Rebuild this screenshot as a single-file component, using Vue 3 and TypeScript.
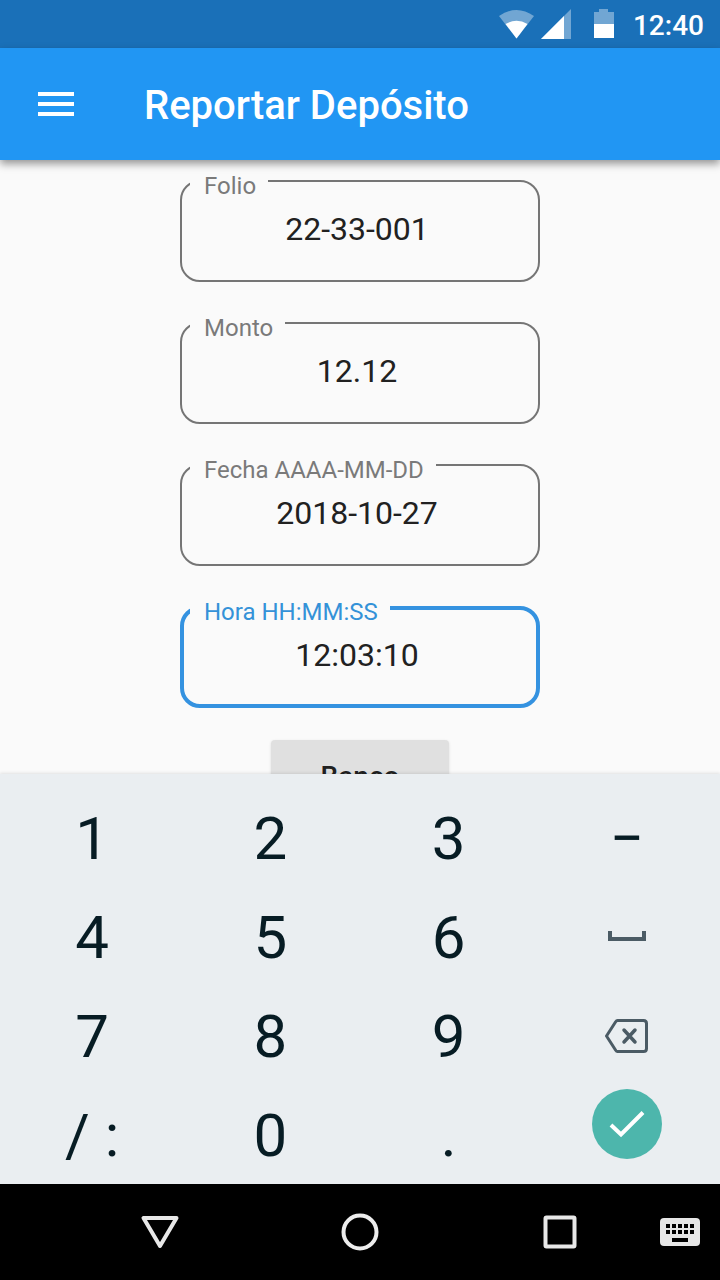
<script setup lang="ts">
import { reactive, ref } from 'vue'

interface Field {
  id: string
  label: string
  value: string
}

const fields = reactive<Field[]>([
  { id: 'folio', label: 'Folio', value: '22-33-001' },
  { id: 'monto', label: 'Monto', value: '12.12' },
  { id: 'fecha', label: 'Fecha AAAA-MM-DD', value: '2018-10-27' },
  { id: 'hora', label: 'Hora HH:MM:SS', value: '12:03:10' },
])

const activeId = ref<string>('hora')

const keys: string[] = [
  '1', '2', '3', '−',
  '4', '5', '6', 'space',
  '7', '8', '9', 'delete',
  '/ :', '0', '.', 'done',
]

function press(key: string): void {
  const field = fields.find((f) => f.id === activeId.value)
  if (!field || key === 'done') return
  if (key === 'delete') field.value = field.value.slice(0, -1)
  else if (key === 'space') field.value += ' '
  else if (key === '/ :') field.value += ':'
  else if (key === '−') field.value += '-'
  else field.value += key
}
</script>

<template>
  <div class="screen">
    <div class="status">
      <svg class="signals" width="118" height="32" viewBox="0 0 118 32" aria-hidden="true">
        <path d="M2 8Q19.500 -4 37 8L19.500 30.500Z" fill="#fff" opacity=".38" />
        <path d="M8.500 16Q19.500 9.500 30.500 16L19.500 30.500Z" fill="#fff" />
        <path d="M44 31L74 1V31Z" fill="#fff" opacity=".38" />
        <path d="M44 31L67 8V31Z" fill="#fff" />
        <path d="M97 4H102V1H111V4H117V16H97Z" fill="#fff" opacity=".38" />
        <path d="M97 16H117V30H97Z" fill="#fff" />
      </svg>
      <span class="clock">12:40</span>
    </div>

    <header class="bar">
      <button class="menu" type="button" aria-label="Menú">
        <svg width="36" height="24" viewBox="0 0 36 24" fill="#fff">
          <path d="M0 0H36V4H0ZM0 10H36V14H0ZM0 20H36V24H0Z" />
        </svg>
      </button>
      <h1>Reportar Depósito</h1>
    </header>

    <main class="content">
      <form class="form" @submit.prevent>
        <div
          v-for="field in fields"
          :key="field.id"
          class="field"
          :class="{ active: field.id === activeId }"
        >
          <input
            :id="field.id"
            v-model="field.value"
            type="text"
            inputmode="none"
            @focus="activeId = field.id"
          />
          <label :for="field.id">{{ field.label }}</label>
        </div>
        <button class="bank" type="button">Banco</button>
      </form>
    </main>

    <section class="keyboard" aria-label="Teclado">
      <button
        v-for="key in keys"
        :key="key"
        type="button"
        class="key"
        :class="{ last: key === 'done' }"
        :aria-label="key"
        @click="press(key)"
      >
        <svg v-if="key === 'space'" width="38" height="12" viewBox="0 0 38 12" fill="none">
          <path d="M2 0V8H36V0" stroke="#4b5b65" stroke-width="4" />
        </svg>
        <svg v-else-if="key === 'delete'" width="44" height="34" viewBox="0 0 44 34" fill="none" stroke="#4b5b65">
          <path
            d="M12.500 1.500H38.500Q41.500 1.500 41.500 4.500V29.500Q41.500 32.500 38.500 32.500H12.500Q11.500 32.500 10.500 31L1.500 17L10.500 3Q11.500 1.500 12.500 1.500Z"
            stroke-width="3"
            stroke-linejoin="round"
          />
          <path d="M19 11L30 23M30 11L19 23" stroke-width="3.500" stroke-linecap="round" />
        </svg>
        <span v-else-if="key === 'done'" class="done">
          <svg width="36" height="28" viewBox="0 0 36 28" fill="none">
            <path d="M2 15L12 24.500L34 2.500" stroke="#fff" stroke-width="4" />
          </svg>
        </span>
        <template v-else>{{ key }}</template>
      </button>
    </section>

    <nav class="nav">
      <button class="back" type="button" aria-label="Atrás">
        <svg width="40" height="36" viewBox="0 0 40 36" fill="none">
          <path d="M3.500 4H36.500L20 32Z" stroke="#e8e8e8" stroke-width="4" stroke-linejoin="round" />
        </svg>
      </button>
      <button class="home" type="button" aria-label="Inicio">
        <svg width="40" height="40" viewBox="0 0 40 40" fill="none">
          <circle cx="20" cy="20" r="16.500" stroke="#ededed" stroke-width="4" />
        </svg>
      </button>
      <button class="recent" type="button" aria-label="Recientes">
        <svg width="36" height="36" viewBox="0 0 36 36" fill="none">
          <rect x="3.500" y="3.500" width="29" height="29" rx="1" stroke="#e8e8e8" stroke-width="4" />
        </svg>
      </button>
      <button class="switch" type="button" aria-label="Cambiar teclado">
        <svg width="40" height="28" viewBox="0 0 40 28">
          <rect width="40" height="28" rx="4" fill="#e6e6e6" />
          <path
            d="M6 6h4v4h-4zM12 6h4v4h-4zM18 6h4v4h-4zM24 6h4v4h-4zM30 6h4v4h-4zM6 12h4v4h-4zM12 12h4v4h-4zM18 12h4v4h-4zM24 12h4v4h-4zM30 12h4v4h-4zM12 20h16v4h-16z"
            fill="#000"
          />
        </svg>
      </button>
    </nav>
  </div>
</template>

<style>
body {
  margin: 0;
}
</style>

<style scoped>
.screen {
  display: flex;
  flex-direction: column;
  height: 100vh;
  overflow: hidden;
  background: #fafafa;
  font-family: Roboto, 'Liberation Sans', sans-serif;
}

button {
  margin: 0;
  padding: 0;
  border: 0;
  background: none;
  font-family: inherit;
  cursor: pointer;
}

svg {
  display: block;
}

.status {
  display: flex;
  flex: none;
  align-items: center;
  justify-content: flex-end;
  gap: 18px;
  height: 48px;
  padding-right: 16px;
  background: #1a70b8;
  color: #fff;
}

.clock {
  padding-top: 4px;
  font-size: 28px;
  font-weight: 500;
  line-height: 44px;
}

.bar {
  position: relative;
  z-index: 1;
  display: flex;
  flex: none;
  align-items: center;
  height: 112px;
  background: #2196f3;
  box-shadow: 0 4px 8px rgba(0, 0, 0, 0.4);
}

.menu {
  display: grid;
  place-items: center;
  width: 112px;
  height: 112px;
}

h1 {
  margin: 0 0 0 32px;
  padding-top: 4px;
  color: #fff;
  font-size: 40px;
  font-weight: 500;
  line-height: 48px;
}

.content {
  flex: 1;
  min-height: 0;
  overflow: hidden;
}

.form {
  display: flex;
  flex-direction: column;
  align-items: center;
  gap: 40px;
  padding-top: 20px;
}

.field {
  position: relative;
  width: 50%;
}

.field input {
  display: block;
  box-sizing: border-box;
  width: 100%;
  height: 102px;
  padding: 0 30px 4px 24px;
  border: 2px solid #757575;
  border-radius: 20px;
  outline: none;
  background: transparent;
  color: #212121;
  font-family: inherit;
  font-size: 32px;
  text-align: center;
}

.field label {
  position: absolute;
  top: -8px;
  left: 10px;
  padding: 0 12px 0 14px;
  background: #fafafa;
  color: #7a7a7a;
  font-size: 24px;
  line-height: 28px;
}

.field.active input {
  padding: 0 28px 4px 22px;
  border: 4px solid #3492e0;
}

.field.active label {
  color: #3492d8;
}

.bank {
  height: 72px;
  margin-top: -8px;
  padding: 0 50px;
  border-radius: 4px;
  background: #e0e0e0;
  box-shadow: 0 1px 3px rgba(0, 0, 0, 0.12);
  color: #212121;
  font-size: 28px;
  font-weight: 500;
}

.keyboard {
  position: relative;
  display: grid;
  flex: none;
  grid-template-columns: repeat(4, 1fr);
  grid-auto-rows: 99px;
  padding: 14px 4px 0 3px;
  background: #eaeef1;
  box-shadow: 0 -1px 3px rgba(0, 0, 0, 0.1);
}

.key {
  display: flex;
  align-items: center;
  justify-content: center;
  padding-top: 2px;
  color: #071c24;
  font-size: 60px;
  line-height: 72px;
}

.key > svg {
  margin-bottom: 2px;
}

.key.last {
  align-items: flex-start;
  padding-top: 4px;
}

.done {
  display: grid;
  place-items: center;
  width: 70px;
  height: 70px;
  border-radius: 50%;
  background: #4db6ac;
}

.nav {
  display: grid;
  flex: none;
  grid-template-columns: 60px 1fr 1fr 1fr 60px;
  height: 96px;
  background: #000;
}

.nav button {
  display: flex;
  align-items: center;
  justify-content: center;
}

.nav .back {
  grid-column: 2;
}

.nav .switch {
  justify-content: flex-start;
}
</style>
